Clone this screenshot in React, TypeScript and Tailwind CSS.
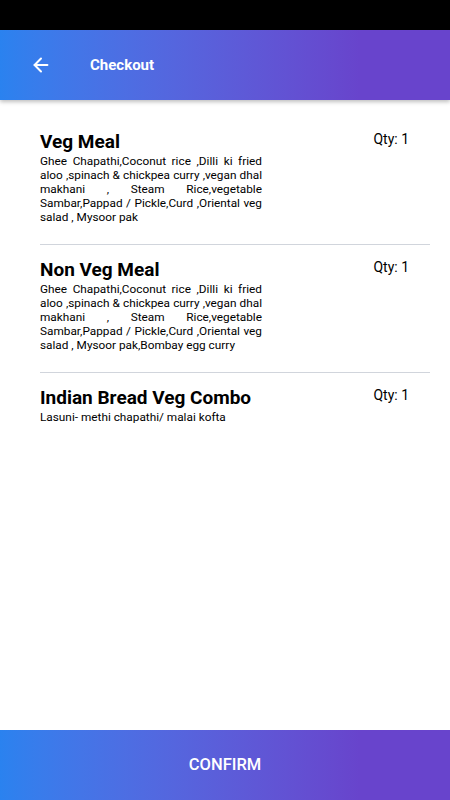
import { ArrowLeft } from 'lucide-react';

type Item = {
  id: string;
  title: string;
  description: string;
  qty: number;
};

const items: Item[] = [
  {
    id: 'veg',
    title: 'Veg Meal',
    description:
      'Ghee Chapathi,Coconut rice ,Dilli ki fried aloo ,spinach & chickpea curry ,vegan dhal makhani , Steam Rice,vegetable Sambar,Pappad / Pickle,Curd ,Oriental veg salad , Mysoor pak',
    qty: 1,
  },
  {
    id: 'nonveg',
    title: 'Non Veg Meal',
    description:
      'Ghee Chapathi,Coconut rice ,Dilli ki fried aloo ,spinach & chickpea curry ,vegan dhal makhani , Steam Rice,vegetable Sambar,Pappad / Pickle,Curd ,Oriental veg salad , Mysoor pak,Bombay egg curry',
    qty: 1,
  },
  {
    id: 'bread',
    title: 'Indian Bread Veg Combo',
    description: 'Lasuni- methi chapathi/ malai kofta',
    qty: 1,
  },
];

const gradient = 'bg-linear-to-r from-[#2a82ef] from-0% to-[#6844cc] to-80%';

export default function App() {
  return (
    <div className="flex h-[800px] w-full flex-col bg-white font-['Roboto',sans-serif]">
      <div className="h-[30px] shrink-0 bg-black" />
      <header className={`relative z-10 flex h-[70px] shrink-0 items-center shadow-[0_2px_4px_rgba(0,0,0,0.25)] ${gradient}`}>
        <ArrowLeft className="ml-[30px] h-[22px] w-[22px] text-white" strokeWidth={2.2} />
        <h1 className="ml-[38px] text-[15px] font-bold text-white">Checkout</h1>
      </header>

      <main className="flex-1 pl-10 pr-5 pt-[17px]">
        {items.map(({ id, title, description, qty }, i) => (
          <div
            key={id}
            className={`flex justify-between pt-[14px] ${i < items.length - 1 ? 'border-b border-gray-300 pb-[20px]' : ''}`}
          >
            <div>
              <p className="text-[19px] font-bold leading-[22px] text-black">{title}</p>
              <p className="mt-px w-[222px] text-justify text-[11.8px] leading-[14px] text-black">{description}</p>
            </div>
            <span className="mr-[21px] mt-[-2px] text-[14px] leading-[20px] text-black">Qty: {qty}</span>
          </div>
        ))}
      </main>

      <button className={`flex h-[70px] shrink-0 items-center justify-center ${gradient}`}>
        <span className="text-[16.5px] font-medium text-white">CONFIRM</span>
      </button>
    </div>
  );
}
